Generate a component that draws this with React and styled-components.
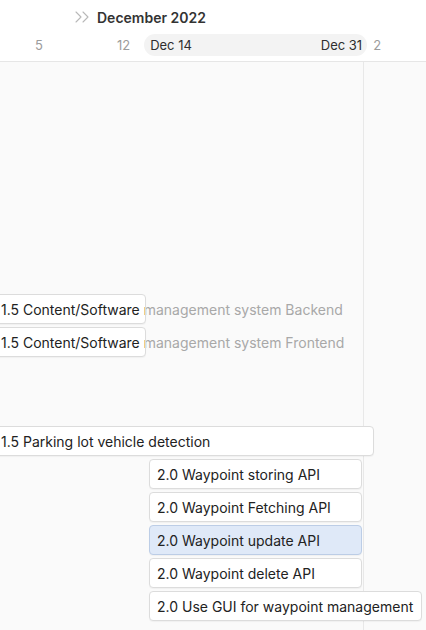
import styled, { createGlobalStyle } from "styled-components";
import { ChevronsRight } from "lucide-react";

const GlobalStyle = createGlobalStyle`
  body {
    margin: 0;
    font-family: Inter, "Noto Sans", sans-serif;
    background: #fafafa;
    color: #222;
  }
`;

const Page = styled.div`
  width: 426px;
  height: 630px;
  overflow: hidden;
  display: flex;
  flex-direction: column;
`;

const Header = styled.div`
  height: 61px;
  background: #fff;
  border-bottom: 1px solid #e6e6e6;
  flex-shrink: 0;
`;

const MonthRow = styled.div`
  height: 34px;
  display: flex;
  align-items: center;
  padding-left: 70px;
  gap: 3px;
`;

const MonthTitle = styled.span`
  font-size: 14px;
  font-weight: 600;
  color: #333;
`;

const DaysRow = styled.div`
  height: 22px;
  display: flex;
  align-items: center;
  font-size: 13px;
`;

const Day = styled.span`
  color: #9c9c9c;
  margin-left: ${(p) => p.$gap}px;
`;

const RangePill = styled.div`
  margin-left: 14px;
  width: 223px;
  height: 22px;
  box-sizing: border-box;
  padding: 0 5px 0 6px;
  border-radius: 11px;
  background: #f3f3f3;
  display: flex;
  align-items: center;
  justify-content: space-between;
  color: #2e2e2e;
`;

const Body = styled.div`
  flex: 1;
  display: flex;
`;

const Canvas = styled.div`
  width: 363px;
  border-right: 1px solid #e8e8e8;
  display: flex;
  flex-direction: column;
`;

const Side = styled.div`
  flex: 1;
`;

const Row = styled.div`
  position: relative;
  height: 33px;
  flex-shrink: 0;
`;

const Bar = styled.div`
  position: absolute;
  top: 1px;
  left: ${(p) => p.$left}px;
  width: ${(p) => p.$width}px;
  height: 30px;
  box-sizing: border-box;
  padding-left: 7px;
  display: flex;
  align-items: center;
  overflow: hidden;
  white-space: nowrap;
  font-size: 14px;
  color: #222;
  border-radius: 4px;
  background: ${(p) => (p.$selected ? "#dfe9f8" : "#fff")};
  border: 1px solid ${(p) => (p.$selected ? "#bccde6" : "#dcdcdc")};
  box-shadow: 0 1px 1px rgba(0, 0, 0, 0.04);
  z-index: 2;
`;

const GhostLabel = styled.span`
  position: absolute;
  top: 1px;
  left: ${(p) => p.$left + 8}px;
  height: 30px;
  display: flex;
  align-items: center;
  white-space: nowrap;
  font-size: 14px;
  color: #a8a8a8;
  z-index: 1;
`;

const tasks = [
  { row: 7, left: -7, width: 153, text: "1.5 Content/Software management system Backend", overflow: true },
  { row: 8, left: -7, width: 153, text: "1.5 Content/Software management system Frontend", overflow: true },
  { row: 11, left: -7, width: 381, text: "1.5 Parking lot vehicle detection" },
  { row: 12, left: 149, width: 213, text: "2.0 Waypoint storing API" },
  { row: 13, left: 149, width: 213, text: "2.0 Waypoint Fetching API" },
  { row: 14, left: 149, width: 213, text: "2.0 Waypoint update API", selected: true },
  { row: 15, left: 149, width: 213, text: "2.0 Waypoint delete API" },
  { row: 16, left: 149, width: 273, text: "2.0 Use GUI for waypoint management" },
];

export default function App() {
  const rows = Array.from({ length: 18 }, (_, i) => tasks.find((t) => t.row === i));

  return (
    <Page>
      <GlobalStyle />
      <Header>
        <MonthRow>
          <ChevronsRight size={24} strokeWidth={1.1} color="#b8b8b8" />
          <MonthTitle>December 2022</MonthTitle>
        </MonthRow>
        <DaysRow>
          <Day $gap={35}>5</Day>
          <Day $gap={74}>12</Day>
          <RangePill>
            <span>Dec 14</span>
            <span>Dec 31</span>
          </RangePill>
          <Day $gap={6}>2</Day>
        </DaysRow>
      </Header>
      <Body>
        <Canvas>
          {rows.map((task, i) => (
            <Row key={i}>
              {task && (
                <>
                  {task.overflow && <GhostLabel $left={task.left}>{task.text}</GhostLabel>}
                  <Bar $left={task.left} $width={task.width} $selected={task.selected}>
                    {task.text}
                  </Bar>
                </>
              )}
            </Row>
          ))}
        </Canvas>
        <Side />
      </Body>
    </Page>
  );
}
